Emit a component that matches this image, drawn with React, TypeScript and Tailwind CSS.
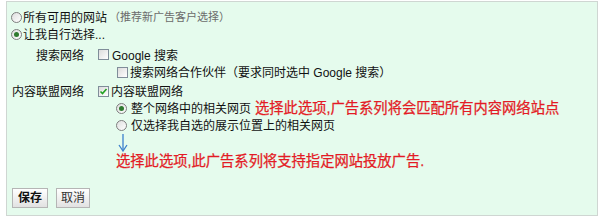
import React from 'react';

const font = { fontFamily: '"Liberation Sans", "Noto Sans CJK SC", sans-serif' };

const Radio: React.FC<{ checked?: boolean }> = ({ checked }) => (
  <span className="inline-flex items-center justify-center w-[11px] h-[11px] rounded-full border border-[#7e7e7e] bg-gradient-to-br from-[#dedede] to-white flex-shrink-0">
    {checked && <span className="w-[5px] h-[5px] rounded-full bg-[#2f7a2f]" />}
  </span>
);

const Checkbox: React.FC<{ checked?: boolean }> = ({ checked }) => (
  <span className="inline-flex items-center justify-center w-[11px] h-[11px] border border-[#7f8d99] bg-gradient-to-br from-[#dcdcdc] to-white flex-shrink-0">
    {checked && (
      <svg width="9" height="9" viewBox="0 0 9 9">
        <path d="M1.5 4.5 L3.5 6.5 L7.5 2" fill="none" stroke="#21a121" strokeWidth="1.6" />
      </svg>
    )}
  </span>
);

const App: React.FC = () => {
  return (
    <div className="w-[600px] h-[219px] bg-white text-[12px] text-[#111]" style={font}>
      <div className="ml-[6px] mt-[1px] w-[592px] h-[215px] bg-[#e5fbed] border border-[#cfd6d2] pt-[7px]">
        <div className="h-[17px] flex items-center pl-[4px]">
          <Radio />
          <span className="ml-[1px]">所有可用的网站</span>
          <span className="ml-[2px] text-[11px] text-[#6b6b6b]">（推荐新广告客户选择）</span>
        </div>
        <div className="h-[17px] flex items-center pl-[4px]">
          <Radio checked />
          <span className="ml-[1px]">让我自行选择...</span>
        </div>

        <div className="mt-[4px] h-[17px] flex items-center">
          <span className="w-[77px] text-right">搜索网络</span>
          <span className="ml-[14px]"><Checkbox /></span>
          <span className="ml-[3px]">Google 搜索</span>
        </div>
        <div className="h-[17px] flex items-center pl-[110px]">
          <Checkbox />
          <span className="ml-[2px]">搜索网络合作伙伴（要求同时选中 Google 搜索）</span>
        </div>

        <div className="mt-[2px] h-[17px] flex items-center">
          <span className="w-[77px] text-right">内容联盟网络</span>
          <span className="ml-[14px]"><Checkbox checked /></span>
          <span className="ml-[2px]">内容联盟网络</span>
        </div>
        <div className="h-[17px] flex items-center pl-[109px]">
          <Radio checked />
          <span className="ml-[4px]">整个网络中的相关网页</span>
          <span className="ml-[4px] text-[14.3px] text-[#e31b25] leading-none [-webkit-text-stroke:0.25px_#e31b25]">选择此选项,广告系列将会匹配所有内容网络站点</span>
        </div>
        <div className="h-[17px] flex items-center pl-[109px]">
          <Radio />
          <span className="ml-[4px]">仅选择我自选的展示位置上的相关网页</span>
        </div>
        <div className="h-[18px] pl-[111px]">
          <svg width="10" height="18" viewBox="0 0 10 18">
            <path d="M5 0 V16" stroke="#3b7fcc" strokeWidth="1.3" fill="none" />
            <path d="M1 11 L5 17 L9 11" stroke="#3b7fcc" strokeWidth="1.3" fill="none" />
          </svg>
        </div>
        <div className="h-[18px] flex items-center pl-[109px]">
          <span className="text-[14.3px] text-[#e31b25] leading-none [-webkit-text-stroke:0.25px_#e31b25]">选择此选项,此广告系列将支持指定网站投放广告.</span>
        </div>

        <div className="mt-[18px] flex items-center gap-[8px] pl-[5px]">
          <button className="h-[20px] w-[36px] border border-[#b5b5b5] bg-gradient-to-b from-white to-[#e2e2e2] font-bold text-[12px] text-[#111] leading-none">
            保存
          </button>
          <button className="h-[20px] w-[34px] border border-[#b5b5b5] bg-gradient-to-b from-white to-[#e2e2e2] text-[12px] text-[#333] leading-none">
            取消
          </button>
        </div>
      </div>
    </div>
  );
};

export default App;
